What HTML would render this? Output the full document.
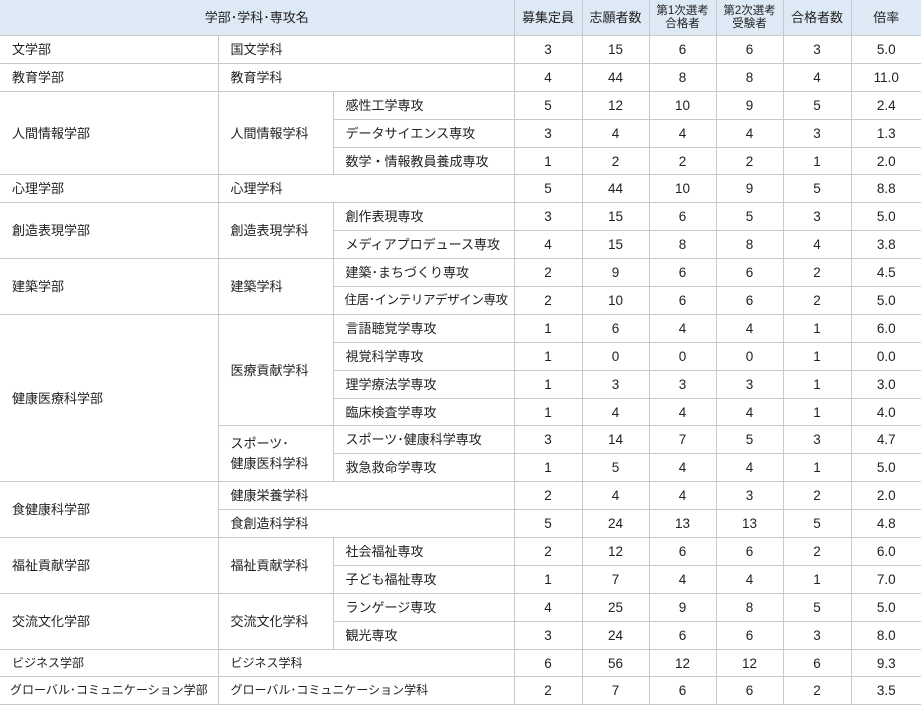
<!DOCTYPE html>
<html><head><meta charset="utf-8"><style>
body{margin:0;background:#fff;}
table{border-collapse:collapse;table-layout:fixed;width:921px;font-family:"Liberation Sans","Noto Sans CJK JP",sans-serif;font-size:13px;color:#222;}
td,th{border:1px solid #c9c9c9;padding:0 0 0 12px;height:26.9px;line-height:15px;white-space:nowrap;overflow:hidden;}
th{background:#dde9f5;font-weight:normal;text-align:center;padding:0;height:35px;}
th.s{font-size:11.5px;line-height:13px;}
td.n{text-align:center;padding:0;font-size:13.5px;}
tr:first-child th{border-top:none;}
td:first-child,th:first-child{border-left:none;}
td:last-child,th:last-child{border-right:none;}
</style></head><body>
<table>
<colgroup><col style="width:218px"><col style="width:115px"><col style="width:181px"><col style="width:68px"><col style="width:67px"><col style="width:67px"><col style="width:67px"><col style="width:68px"><col style="width:70px"></colgroup>
<tr><th colspan="3">学部･学科･専攻名</th><th>募集定員</th><th>志願者数</th><th class="s">第1次選考<br>合格者</th><th class="s">第2次選考<br>受験者</th><th>合格者数</th><th>倍率</th></tr>
<tr><td>文学部</td><td colspan="2">国文学科</td><td class="n">3</td><td class="n">15</td><td class="n">6</td><td class="n">6</td><td class="n">3</td><td class="n">5.0</td></tr>
<tr><td>教育学部</td><td colspan="2">教育学科</td><td class="n">4</td><td class="n">44</td><td class="n">8</td><td class="n">8</td><td class="n">4</td><td class="n">11.0</td></tr>
<tr><td rowspan="3">人間情報学部</td><td rowspan="3">人間情報学科</td><td>感性工学専攻</td><td class="n">5</td><td class="n">12</td><td class="n">10</td><td class="n">9</td><td class="n">5</td><td class="n">2.4</td></tr>
<tr><td>データサイエンス専攻</td><td class="n">3</td><td class="n">4</td><td class="n">4</td><td class="n">4</td><td class="n">3</td><td class="n">1.3</td></tr>
<tr><td>数学・情報教員養成専攻</td><td class="n">1</td><td class="n">2</td><td class="n">2</td><td class="n">2</td><td class="n">1</td><td class="n">2.0</td></tr>
<tr><td>心理学部</td><td colspan="2">心理学科</td><td class="n">5</td><td class="n">44</td><td class="n">10</td><td class="n">9</td><td class="n">5</td><td class="n">8.8</td></tr>
<tr><td rowspan="2">創造表現学部</td><td rowspan="2">創造表現学科</td><td>創作表現専攻</td><td class="n">3</td><td class="n">15</td><td class="n">6</td><td class="n">5</td><td class="n">3</td><td class="n">5.0</td></tr>
<tr><td>メディアプロデュース専攻</td><td class="n">4</td><td class="n">15</td><td class="n">8</td><td class="n">8</td><td class="n">4</td><td class="n">3.8</td></tr>
<tr><td rowspan="2">建築学部</td><td rowspan="2">建築学科</td><td>建築･まちづくり専攻</td><td class="n">2</td><td class="n">9</td><td class="n">6</td><td class="n">6</td><td class="n">2</td><td class="n">4.5</td></tr>
<tr><td style="font-size:12.5px;letter-spacing:-0.4px;padding-left:11px">住居･インテリアデザイン専攻</td><td class="n">2</td><td class="n">10</td><td class="n">6</td><td class="n">6</td><td class="n">2</td><td class="n">5.0</td></tr>
<tr><td rowspan="6">健康医療科学部</td><td rowspan="4">医療貢献学科</td><td>言語聴覚学専攻</td><td class="n">1</td><td class="n">6</td><td class="n">4</td><td class="n">4</td><td class="n">1</td><td class="n">6.0</td></tr>
<tr><td>視覚科学専攻</td><td class="n">1</td><td class="n">0</td><td class="n">0</td><td class="n">0</td><td class="n">1</td><td class="n">0.0</td></tr>
<tr><td>理学療法学専攻</td><td class="n">1</td><td class="n">3</td><td class="n">3</td><td class="n">3</td><td class="n">1</td><td class="n">3.0</td></tr>
<tr><td>臨床検査学専攻</td><td class="n">1</td><td class="n">4</td><td class="n">4</td><td class="n">4</td><td class="n">1</td><td class="n">4.0</td></tr>
<tr><td rowspan="2" style="line-height:20px">スポーツ･<br>健康医科学科</td><td>スポーツ･健康科学専攻</td><td class="n">3</td><td class="n">14</td><td class="n">7</td><td class="n">5</td><td class="n">3</td><td class="n">4.7</td></tr>
<tr><td>救急救命学専攻</td><td class="n">1</td><td class="n">5</td><td class="n">4</td><td class="n">4</td><td class="n">1</td><td class="n">5.0</td></tr>
<tr><td rowspan="2">食健康科学部</td><td colspan="2">健康栄養学科</td><td class="n">2</td><td class="n">4</td><td class="n">4</td><td class="n">3</td><td class="n">2</td><td class="n">2.0</td></tr>
<tr><td colspan="2">食創造科学科</td><td class="n">5</td><td class="n">24</td><td class="n">13</td><td class="n">13</td><td class="n">5</td><td class="n">4.8</td></tr>
<tr><td rowspan="2">福祉貢献学部</td><td rowspan="2">福祉貢献学科</td><td>社会福祉専攻</td><td class="n">2</td><td class="n">12</td><td class="n">6</td><td class="n">6</td><td class="n">2</td><td class="n">6.0</td></tr>
<tr><td>子ども福祉専攻</td><td class="n">1</td><td class="n">7</td><td class="n">4</td><td class="n">4</td><td class="n">1</td><td class="n">7.0</td></tr>
<tr><td rowspan="2">交流文化学部</td><td rowspan="2">交流文化学科</td><td>ランゲージ専攻</td><td class="n">4</td><td class="n">25</td><td class="n">9</td><td class="n">8</td><td class="n">5</td><td class="n">5.0</td></tr>
<tr><td>観光専攻</td><td class="n">3</td><td class="n">24</td><td class="n">6</td><td class="n">6</td><td class="n">3</td><td class="n">8.0</td></tr>
<tr><td style="font-size:12px">ビジネス学部</td><td colspan="2" style="font-size:12px">ビジネス学科</td><td class="n">6</td><td class="n">56</td><td class="n">12</td><td class="n">12</td><td class="n">6</td><td class="n">9.3</td></tr>
<tr><td style="font-size:12px;padding-left:10px">グローバル･コミュニケーション学部</td><td colspan="2" style="font-size:12px">グローバル･コミュニケーション学科</td><td class="n">2</td><td class="n">7</td><td class="n">6</td><td class="n">6</td><td class="n">2</td><td class="n">3.5</td></tr>
</table>
</body></html>
